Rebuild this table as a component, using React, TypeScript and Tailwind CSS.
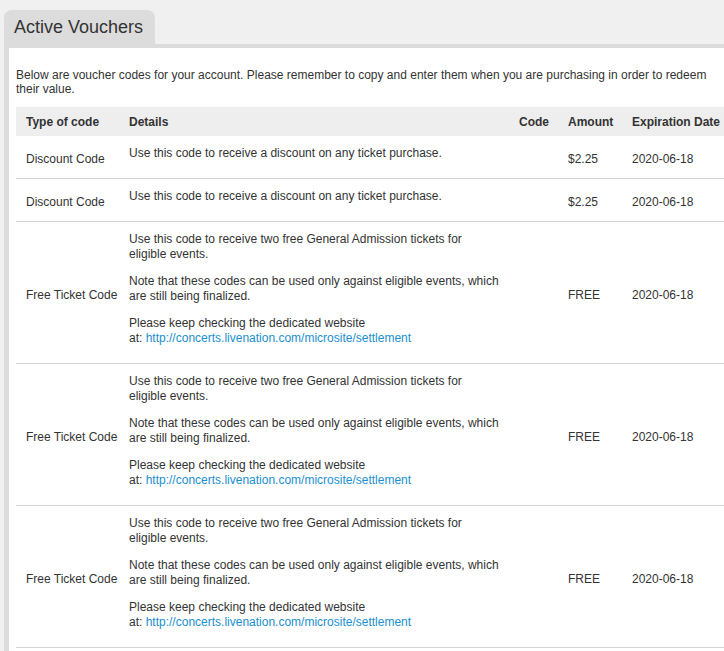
const vouchers = [
  { type: 'Discount Code', kind: 'discount', amount: '$2.25', expires: '2020-06-18' },
  { type: 'Discount Code', kind: 'discount', amount: '$2.25', expires: '2020-06-18' },
  { type: 'Free Ticket Code', kind: 'free', amount: 'FREE', expires: '2020-06-18' },
  { type: 'Free Ticket Code', kind: 'free', amount: 'FREE', expires: '2020-06-18' },
  { type: 'Free Ticket Code', kind: 'free', amount: 'FREE', expires: '2020-06-18' },
]

function Details({ kind }: { kind: string }) {
  if (kind === 'discount') {
    return <p className="mb-[12px]">Use this code to receive a discount on any ticket purchase.</p>
  }
  return (
    <>
      <p className="mb-[12px] w-[350px]">
        Use this code to receive two free General Admission tickets for eligible events.
      </p>
      <p className="mb-[12px]">
        Note that these codes can be used only against eligible events, which are still being finalized.
      </p>
      <p className="mb-[12px] w-[250px] whitespace-nowrap">
        Please keep checking the dedicated website
        <br />
        at:{' '}
        <a href="#" className="text-[#1a8fd0]">
          http://concerts.livenation.com/microsite/settlement
        </a>
      </p>
    </>
  )
}

export default function App() {
  return (
    <div className="min-h-screen overflow-hidden bg-[#f0f0f0] font-['Liberation_Sans',Arial,sans-serif] text-[12px] leading-[15px] text-[#333]">
      <div className="pl-[4px] pt-[10px]">
        <div className="h-[34px] w-[151px] rounded-t-[8px] bg-[#dcdcdc] px-[10px] text-[18px] leading-[34px] text-[#333]">
          Active Vouchers
        </div>
      </div>
      <div className="ml-[4px] min-h-[607px] border-l-[5px] border-t-[4px] border-[#dcdcdc] bg-white pl-[7px] pt-[20px]">
        <p className="mb-[11px] w-[712px] leading-[14px]">
          Below are voucher codes for your account. Please remember to copy and enter them when you are purchasing in order to redeem their value.
        </p>
        <table className="w-[716px] table-fixed border-collapse text-left">
          <colgroup>
            <col className="w-[103px]" />
            <col className="w-[390px]" />
            <col className="w-[49px]" />
            <col className="w-[64px]" />
            <col className="w-[110px]" />
          </colgroup>
          <thead>
            <tr className="h-[29px] bg-[#eeeeee] font-bold">
              <th className="px-[10px] pt-[1px] align-middle">Type of code</th>
              <th className="px-[10px] pt-[1px] align-middle">Details</th>
              <th className="px-[10px] pt-[1px] align-middle">Code</th>
              <th className="px-[10px] pt-[1px] align-middle">Amount</th>
              <th className="px-[10px] pt-[1px] align-middle whitespace-nowrap">Expiration Date</th>
            </tr>
          </thead>
          <tbody>
            {vouchers.map((v, i) => (
              <tr key={i} className="border-b border-[#d4d4d4]">
                <td className="px-[10px] pb-[5px] pt-[10px] align-middle whitespace-nowrap">{v.type}</td>
                <td className="px-[10px] pb-[5px] pt-[10px] align-top">
                  <Details kind={v.kind} />
                </td>
                <td className="px-[10px] pb-[5px] pt-[10px] align-middle"></td>
                <td className="px-[10px] pb-[5px] pt-[10px] align-middle">{v.amount}</td>
                <td className="px-[10px] pb-[5px] pt-[10px] align-middle">{v.expires}</td>
              </tr>
            ))}
          </tbody>
        </table>
      </div>
    </div>
  )
}
